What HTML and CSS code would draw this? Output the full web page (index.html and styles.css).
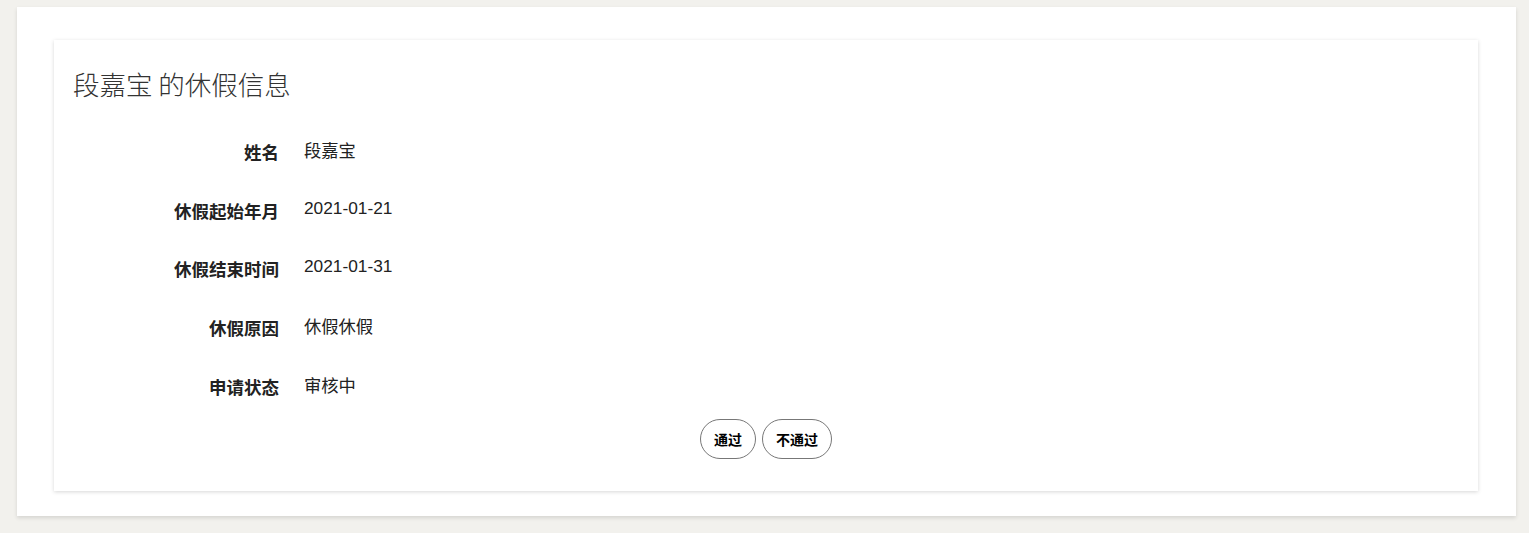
FILE: index.html
```html
<!DOCTYPE html>
<html lang="zh">
<head>
<meta charset="utf-8">
<title>休假信息</title>
<link rel="stylesheet" href="styles.css">
</head>
<body>
<div class="page">
  <div class="card">
    <h1 class="title">段嘉宝 的休假信息</h1>
    <div class="info">
      <div class="row"><div class="label">姓名</div><div class="value">段嘉宝</div></div>
      <div class="row"><div class="label">休假起始年月</div><div class="value">2021-01-21</div></div>
      <div class="row"><div class="label">休假结束时间</div><div class="value">2021-01-31</div></div>
      <div class="row"><div class="label">休假原因</div><div class="value">休假休假</div></div>
      <div class="row"><div class="label">申请状态</div><div class="value">审核中</div></div>
    </div>
    <div class="actions">
      <button class="btn">通过</button>
      <button class="btn">不通过</button>
    </div>
  </div>
</div>
</body>
</html>
```
FILE: styles.css
```css
html, body {
  margin: 0;
  padding: 0;
  background: #f2f1ed;
}
body {
  padding: 7px 13px 17px 17px;
  font-family: "Liberation Sans", "Noto Sans CJK SC", sans-serif;
  color: #222;
}
.page {
  background: #fff;
  padding: 33px 38px 25px 37px;
  box-shadow: 0 2px 4px rgba(0, 0, 0, 0.12);
}
.card {
  background: #fff;
  box-shadow: 0 1px 4px rgba(0, 0, 0, 0.16);
  padding: 26px 19px 32px 19px;
}
.title {
  margin: 0;
  font-size: 26.5px;
  font-weight: 300;
  line-height: 36px;
  color: #333;
  font-family: "Noto Sans CJK SC", sans-serif;
}
.info {
  margin-top: 19px;
}
.row {
  display: flex;
  align-items: center;
  height: 58.75px;
}
.label {
  width: 206px;
  text-align: right;
  font-weight: 700;
  font-size: 17.5px;
  color: #222;
  font-family: "Noto Sans CJK SC", sans-serif;
  padding-top: 2px;
}
.value {
  margin-left: 25px;
  font-size: 17.3px;
  color: #222;
  padding-bottom: 2px;
}
.actions {
  display: flex;
  justify-content: center;
  gap: 6px;
  margin-top: 4px;
}
.btn {
  height: 40px;
  padding: 0 13px;
  border: 1px solid #777;
  border-radius: 20px;
  background: #fff;
  font-family: "Noto Sans CJK SC", sans-serif;
  font-weight: 700;
  font-size: 14px;
  color: #000;
}
```
